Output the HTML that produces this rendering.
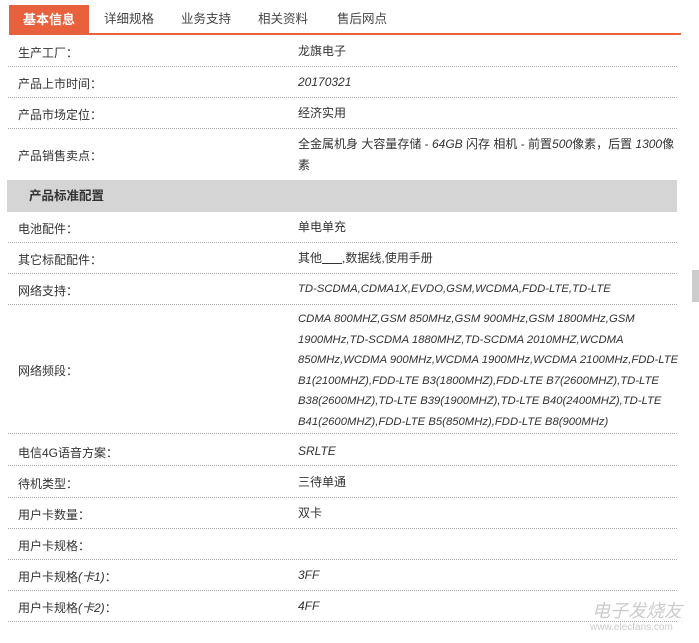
<!DOCTYPE html>
<html><head><meta charset="utf-8"><style>
body{margin:0;width:699px;height:643px;background:#fff;position:relative;overflow:hidden;font-family:"Liberation Sans","Noto Sans CJK SC",sans-serif;font-size:12px;color:#333}
.t{position:absolute;top:5px;height:29px;line-height:29px;font-size:12.5px;color:#444}
.on{left:9px;width:80px;background:#e8603c;color:#fff;font-weight:bold;text-align:center;font-size:13px}
.bar{position:absolute;left:9px;width:672px;top:33px;height:2px;background:#e8603c}
.ln{position:absolute;left:8px;width:669px;height:0;border-top:1px dotted #aaa}
.l{position:absolute;left:18px}
.r{position:absolute;left:298px;width:380px;line-height:20.5px}
.i{font-style:italic}
.nw{white-space:nowrap;font-size:11.3px}
.hd{position:absolute;left:7px;width:670px;top:180px;height:32px;background:#d5d5d5;line-height:32px;font-weight:bold;font-size:12.5px}
</style></head><body>
<div class="t on">基本信息</div>
<div class="t" style="left:104px">详细规格</div>
<div class="t" style="left:181px">业务支持</div>
<div class="t" style="left:258px">相关资料</div>
<div class="t" style="left:337px">售后网点</div>
<div class="bar"></div>

<div class="l" style="top:44px">生产工厂：</div><div class="r" style="top:41px">龙旗电子</div>
<div class="ln" style="top:66px"></div>
<div class="l" style="top:75px">产品上市时间：</div><div class="r i" style="top:72px">20170321</div>
<div class="ln" style="top:97px"></div>
<div class="l" style="top:106px">产品市场定位：</div><div class="r" style="top:103px">经济实用</div>
<div class="ln" style="top:128px"></div>
<div class="l" style="top:147px">产品销售卖点：</div><div class="r" style="top:134px">全金属机身 大容量存储 - <i>64GB</i> 闪存 相机 - 前置<i>500</i>像素，后置 <i>1300</i>像素</div>
<div class="hd"><span style="margin-left:22px">产品标准配置</span></div>
<div class="l" style="top:220px">电池配件：</div><div class="r" style="top:217px">单电单充</div>
<div class="ln" style="top:242px"></div>
<div class="l" style="top:251px">其它标配配件：</div><div class="r" style="top:248px">其他<u>&nbsp;&nbsp;&nbsp;&nbsp;&nbsp;&nbsp;</u>,数据线,使用手册</div>
<div class="ln" style="top:273px"></div>
<div class="l" style="top:282px">网络支持：</div><div class="r i nw" style="top:279px">TD-SCDMA,CDMA1X,EVDO,GSM,WCDMA,FDD-LTE,TD-LTE</div>
<div class="ln" style="top:304px"></div>
<div class="l" style="top:362px">网络频段：</div><div class="r i nw" style="top:309px">CDMA 800MHZ,GSM 850MHz,GSM 900MHz,GSM 1800MHz,GSM<br>1900MHz,TD-SCDMA 1880MHZ,TD-SCDMA 2010MHZ,WCDMA<br>850MHz,WCDMA 900MHz,WCDMA 1900MHz,WCDMA 2100MHz,FDD-LTE<br>B1(2100MHZ),FDD-LTE B3(1800MHZ),FDD-LTE B7(2600MHZ),TD-LTE<br>B38(2600MHZ),TD-LTE B39(1900MHZ),TD-LTE B40(2400MHZ),TD-LTE<br>B41(2600MHZ),FDD-LTE B5(850MHz),FDD-LTE B8(900MHz)</div>
<div class="ln" style="top:433px"></div>
<div class="l" style="top:444px">电信4G语音方案：</div><div class="r i" style="top:441px">SRLTE</div>
<div class="ln" style="top:465px"></div>
<div class="l" style="top:475px">待机类型：</div><div class="r" style="top:472px">三待单通</div>
<div class="ln" style="top:497px"></div>
<div class="l" style="top:506px">用户卡数量：</div><div class="r" style="top:503px">双卡</div>
<div class="ln" style="top:528px"></div>
<div class="l" style="top:537px">用户卡规格：</div>
<div class="ln" style="top:559px"></div>
<div class="l" style="top:568px">用户卡规格<i>(卡1)</i>：</div><div class="r i" style="top:565px">3FF</div>
<div class="ln" style="top:590px"></div>
<div class="l" style="top:599px">用户卡规格<i>(卡2)</i>：</div><div class="r i" style="top:596px">4FF</div>
<div class="ln" style="top:621px"></div>
<div style="position:absolute;left:692px;top:270px;width:7px;height:32px;background:#ccc"></div>
<div style="position:absolute;left:592px;top:597px;color:#ccc;font-size:18px;font-style:italic">电子发烧友</div>
<div style="position:absolute;left:590px;top:622px;color:#ccc;font-size:10px">www.elecfans.com</div>
</body></html>
